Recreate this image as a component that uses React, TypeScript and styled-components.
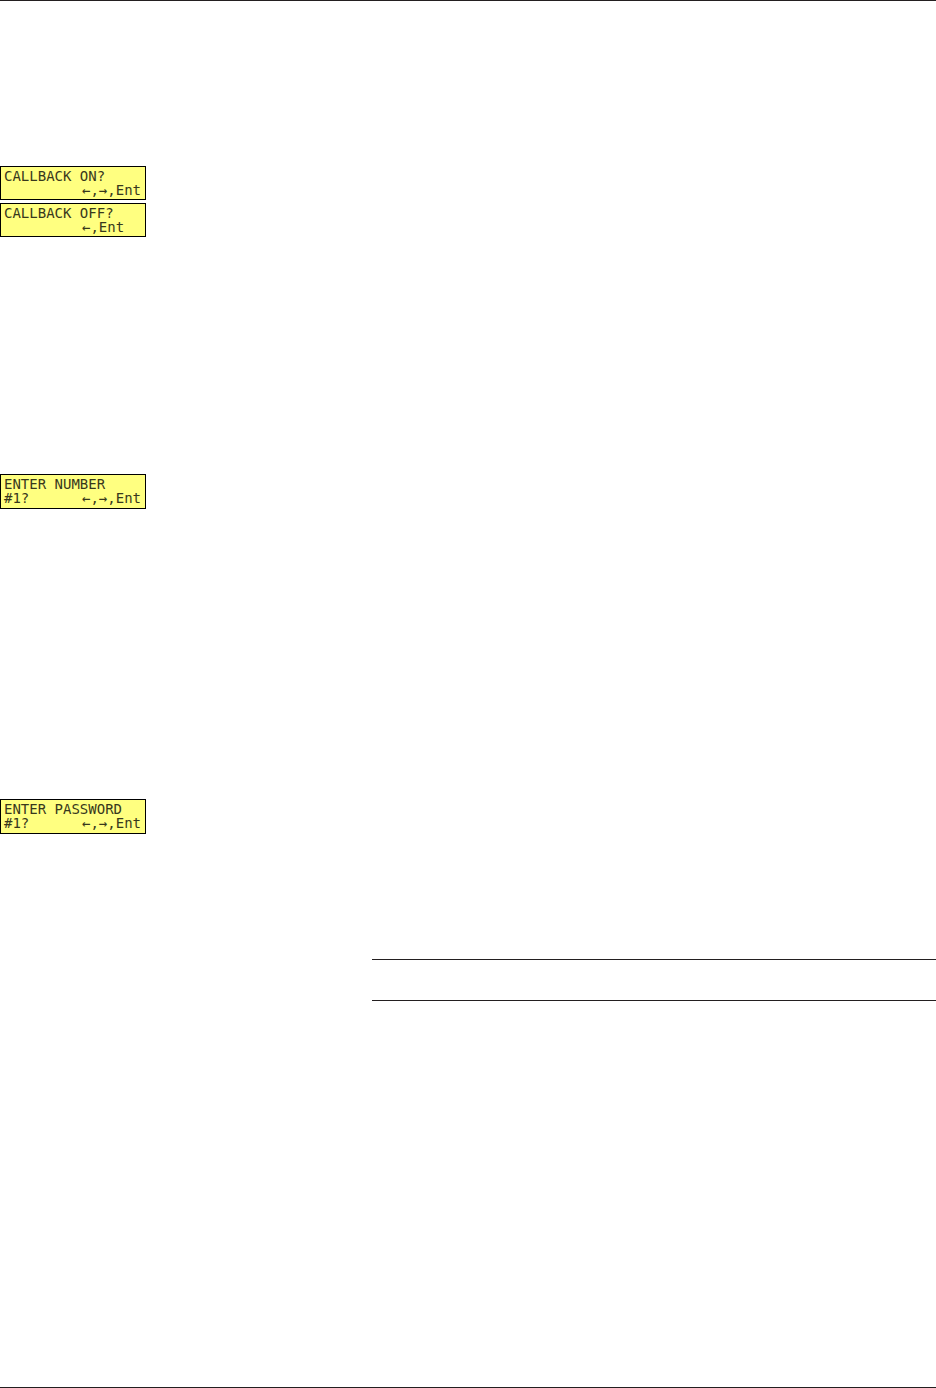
import React from "react";
import styled, { createGlobalStyle } from "styled-components";

const GlobalStyle = createGlobalStyle`
  *, *::before, *::after { box-sizing: border-box; }
  body { margin: 0; background: #ffffff; }
`;

const Page = styled.main`
  display: flex;
  flex-direction: column;
  min-height: 100vh;
  border-top: 1px solid #231f20;
  border-bottom: 1px solid #231f20;
`;

const Step = styled.section<{ $space: number }>`
  display: flex;
  flex-direction: column;
  align-items: flex-start;
  gap: 3px;
  padding-top: ${(p) => p.$space}px;
`;

const Display = styled.div<{ $tall: boolean }>`
  width: 146px;
  padding: 2px 3px ${(p) => (p.$tall ? 3 : 2)}px;
  border: 1px solid #000000;
  background: #ffff80;
  color: #38381c;
  font-family: "DejaVu Sans Mono", "Liberation Mono", monospace;
  font-size: 14px;
  line-height: 14px;
  white-space: pre;
`;

const Line = styled.div`
  display: grid;
  grid-template-columns: 78px 1fr;
  height: 14px;
`;

const Message = styled.div`
  height: 14px;
`;

const Note = styled.aside`
  height: 42px;
  margin: 125px 0 0 372px;
  border-top: 1px solid #231f20;
  border-bottom: 1px solid #231f20;
`;

type LcdProps = { message: string; item?: string; keys: string };

function Lcd({ message, item = "", keys }: LcdProps) {
  return (
    <Display $tall={item !== ""}>
      <Message>{message}</Message>
      <Line>
        <span>{item}</span>
        <span>{keys}</span>
      </Line>
    </Display>
  );
}

export default function App() {
  return (
    <>
      <GlobalStyle />
      <Page>
        <Step $space={165}>
          <Lcd message="CALLBACK ON?" keys="←,→,Ent" />
          <Lcd message="CALLBACK OFF?" keys="←,Ent" />
        </Step>
        <Step $space={237}>
          <Lcd message="ENTER NUMBER" item="#1?" keys="←,→,Ent" />
        </Step>
        <Step $space={290}>
          <Lcd message="ENTER PASSWORD" item="#1?" keys="←,→,Ent" />
        </Step>
        <Note />
      </Page>
    </>
  );
}
